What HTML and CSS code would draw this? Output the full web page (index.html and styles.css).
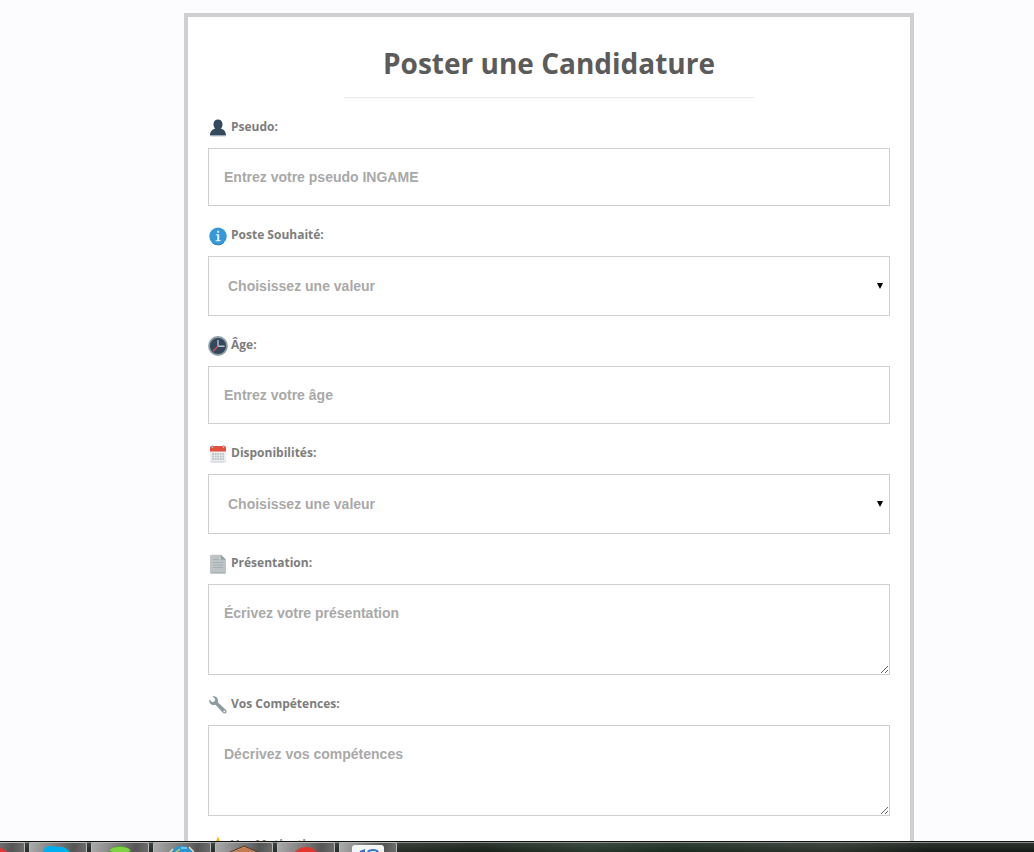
FILE: index.html
```html
<!DOCTYPE html>
<html lang="fr">
<head>
<meta charset="utf-8">
<title>Poster une Candidature</title>
<link rel="stylesheet" href="styles.css">
</head>
<body>
<main class="page">
  <form class="card">
    <h1 class="title">Poster une Candidature</h1>
    <hr class="rule">

    <div class="field">
      <label class="label" for="pseudo">
        <svg class="icon" viewBox="0 0 20 20"><path d="M2 17.600C2 13.500 4 11.500 7.200 10.500 6 9.500 5.500 8 5.500 6.200 5.500 3.500 7.300 1.600 10 1.600s4.500 1.900 4.500 4.600c0 1.800-.5 3.300-1.700 4.300 3.200 1 5.200 3 5.200 7.100z" fill="#34495e"/><path d="M2.500 18h15" stroke="#a4b3bf" stroke-width=".8"/></svg>
        Pseudo:
      </label>
      <input class="control" id="pseudo" type="text" placeholder="Entrez votre pseudo INGAME">
    </div>

    <div class="field">
      <label class="label" for="poste">
        <svg class="icon" viewBox="0 0 20 20"><circle cx="10" cy="10.200" r="8.700" fill="#3498db"/><path d="M4 16.500a8.700 8.700 0 0 0 12 0" fill="none" stroke="#2f80b5"/><path d="M9.300 4.700h1.800v2H9.300zM7.800 8.300h3.400v5.900h1.500v1H7.600v-1h1.700V9.300H7.800z" fill="#edf5fa"/></svg>
        Poste Souhaité:
      </label>
      <div class="select-wrap">
        <select class="control control-select" id="poste"><option>Choisissez une valeur</option></select>
        <svg class="arrow" viewBox="0 0 6 6"><path d="M0 0h6L3 6z"/></svg>
      </div>
    </div>

    <div class="field">
      <label class="label" for="age">
        <svg class="icon" viewBox="0 0 20 20"><circle cx="10" cy="10" r="9" fill="#34495e" stroke="#8b9ea1" stroke-width="1.800"/><path d="M10 4v6.200h6.600" fill="none" stroke="#bdc3c7" stroke-width="1.400"/><path d="M10 10.200l-5 5" stroke="#d0524a" stroke-width="1.400"/></svg>
        Âge:
      </label>
      <input class="control" id="age" type="text" placeholder="Entrez votre âge">
    </div>

    <div class="field">
      <label class="label" for="dispo">
        <svg class="icon" viewBox="0 0 20 20"><rect x="2" y="3" width="16" height="15.500" rx="1.500" fill="#c6cccf"/><path d="M2 7h16v9.500a1 1 0 0 1-1 1H3a1 1 0 0 1-1-1z" fill="#ecf0f1"/><path d="M2 7.500V3.500A1.500 1.500 0 0 1 3.500 2h13A1.500 1.500 0 0 1 18 3.500v4z" fill="#e2513f"/><path d="M4.500 1v3M15.500 1v3" stroke="#b8b8b8" stroke-width="1.400"/><path d="M4 9h12v7H4z" fill="#bdc3c7"/><path d="M4 11.300h12M4 13.700h12M6.500 9v7M9 9v7M11.500 9v7M14 9v7" stroke="#ecf0f1" stroke-width=".7"/></svg>
        Disponibilités:
      </label>
      <div class="select-wrap">
        <select class="control control-select" id="dispo"><option>Choisissez une valeur</option></select>
        <svg class="arrow" viewBox="0 0 6 6"><path d="M0 0h6L3 6z"/></svg>
      </div>
    </div>

    <div class="field">
      <label class="label" for="presentation">
        <svg class="icon" viewBox="0 0 20 20"><path d="M2 2A1.200 1.200 0 0 1 3.200.8H13l5 5V18a1.200 1.200 0 0 1-1.200 1.200H3.200A1.200 1.200 0 0 1 2 18z" fill="#bdc3c7"/><path d="M13 .8l5 5h-5z" fill="#95a5a6"/><path d="M5 5.500h6M5 8.500h10M5 11h10M5 13.500h10" stroke="#a2b0b1" stroke-width=".9"/><path d="M2.500 19h15" stroke="#95a5a6"/></svg>
        Présentation:
      </label>
      <textarea class="control control-area" id="presentation" placeholder="Écrivez votre présentation"></textarea>
    </div>

    <div class="field">
      <label class="label" for="competences">
        <svg class="icon" viewBox="0 0 20 20"><path d="M4.500 1.500C7 .8 9.600 2.400 10 5c.1.900 0 1.500-.2 2.200l8 7.600c1 1 1 2.300.2 3.100-.9.900-2.200.8-3.100-.1L7.500 9.800C5 10.700 2 9.500 1.300 6.700c-.2-.8-.2-1.500 0-2.200L4 7l2.500-.6.7-2.400z" fill="#8a9c9d"/><circle cx="16.300" cy="16.400" r=".9" fill="#fff"/></svg>
        Vos Compétences:
      </label>
      <textarea class="control control-area" id="competences" placeholder="Décrivez vos compétences"></textarea>
    </div>

    <div class="field">
      <label class="label" for="motivations">
        <svg class="icon" viewBox="0 0 20 20"><path d="M10 .5l2.700 6.700 6.300.6-4.800 4.300 1.500 6.400L10 15.200l-5.700 3.300 1.500-6.400L1 7.800l6.300-.6z" fill="#f1b40f"/></svg>
        Vos Motivations:
      </label>
      <textarea class="control control-area" id="motivations"></textarea>
    </div>
  </form>
</main>

<footer class="taskbar">
  <button class="task" type="button" aria-label="Navigateur"><svg class="task-icon" viewBox="0 0 56 9"><circle cx="28" cy="19" r="15" fill="#dd3b33"/></svg></button>
  <button class="task" type="button" aria-label="Messagerie"><svg class="task-icon" viewBox="0 0 56 9"><path d="M13 9q1-6 8-6 3 0 5 1 10-1 14 5z" fill="#00aff0"/></svg></button>
  <button class="task" type="button" aria-label="Musique"><svg class="task-icon" viewBox="0 0 56 9"><circle cx="28" cy="17" r="14" fill="#4fa527"/><ellipse cx="28" cy="7" rx="10" ry="3" fill="#80d443"/></svg></button>
  <button class="task" type="button" aria-label="Web"><svg class="task-icon" viewBox="0 0 56 9"><circle cx="28" cy="16" r="13" fill="#2797d4"/><path d="M16 9l3-3M35 4l5 5" fill="none" stroke="#f0d9b8" stroke-width="1.500"/><path d="M22 9l4-3" stroke="#e1c945" stroke-width="1.500"/><path d="M27 5h6" stroke="#8dd2ee" stroke-width="1.500"/></svg></button>
  <button class="task" type="button" aria-label="Jeu"><svg class="task-icon" viewBox="0 0 56 9"><path d="M12 10l16-7 16 7z" fill="#d58b59" stroke="#493a30"/><path d="M20 8h17M23 6h11" stroke="#a8663f" stroke-width=".7"/></svg></button>
  <button class="task" type="button" aria-label="Enregistreur"><svg class="task-icon" viewBox="0 0 56 9"><circle cx="28" cy="19" r="15" fill="#df392c"/></svg></button>
  <button class="task" type="button" aria-label="Application"><svg class="task-icon" viewBox="0 0 56 9"><rect x="12" y="2" width="32" height="14" rx="3" fill="#f4f5f7"/><path d="M20 9l4-1.500V9M28 9q1-2 5-2t5 2" fill="none" stroke="#3474c4" stroke-width="2"/></svg></button>
</footer>
</body>
</html>
```
FILE: styles.css
```css
* {
  box-sizing: border-box;
}

body {
  display: flex;
  flex-direction: column;
  height: 100vh;
  margin: 0;
  overflow: hidden;
  background: #fcfcff;
  font-family: "Open Sans", sans-serif;
}

.page {
  flex: 1;
  min-height: 0;
  overflow: hidden;
  padding: 13px 120px 0 184px;
}

.card {
  display: flex;
  flex-direction: column;
  gap: 17px;
  max-width: 960px;
  padding: 20px;
  border: 4px solid #cfcfcf;
  background: #fff;
}

.title {
  margin: 6px 0 0;
  color: #5b5b5b;
  font-size: 28px;
  font-weight: 700;
  line-height: 40px;
  text-align: center;
}

.rule {
  width: 60%;
  margin: -3px auto 0;
  border: 0;
  border-top: 1px solid #ebebeb;
}

.field {
  display: flex;
  flex-direction: column;
  gap: 11px;
}

.label {
  display: flex;
  align-items: center;
  gap: 3px;
  height: 22px;
  color: #7d7d7d;
  font-size: 12px;
  font-weight: 700;
}

.icon {
  flex: none;
  width: 20px;
  height: 20px;
  margin-top: 4px;
}

.control {
  display: block;
  width: 100%;
  height: 58px;
  margin: 0;
  padding: 15px;
  border: 1px solid #cfcfcf;
  border-radius: 0;
  background: #fff;
  color: #a9a9a9;
  font: 700 14px/26px "Liberation Sans", Arial, sans-serif;
}

.control::placeholder {
  color: #a9a9a9;
  opacity: 1;
}

.select-wrap {
  position: relative;
}

.control-select {
  height: 60px;
  padding-left: 19px;
  appearance: none;
}

.arrow {
  position: absolute;
  top: 27px;
  right: 7px;
  width: 6px;
  height: 6px;
  pointer-events: none;
}

.control-area {
  height: 91px;
  resize: vertical;
}

.taskbar {
  display: flex;
  flex: none;
  gap: 4px;
  height: 11px;
  overflow: hidden;
  border-top: 1px solid #111;
  background: linear-gradient(#8c908e 0 1px, transparent 1px), linear-gradient(rgba(255, 255, 255, 0.12), transparent), linear-gradient(90deg, #252c27 38%, #172019 46%, #27372b 57%, #192a1e 65%, #2b322c 80%, #141b16 90%);
}

.task {
  flex: none;
  width: 58px;
  height: 44px;
  padding: 0;
  border: 1px solid #b5b8b6;
  border-bottom: 0;
  border-radius: 2px;
  background: linear-gradient(100deg, #aaa 0, #777 45%, #555 70%, #777);
  line-height: 0;
}

.task:first-child {
  margin-left: -33px;
}

.task-icon {
  display: block;
  width: 56px;
  height: 9px;
  margin-bottom: 34px;
}
```
